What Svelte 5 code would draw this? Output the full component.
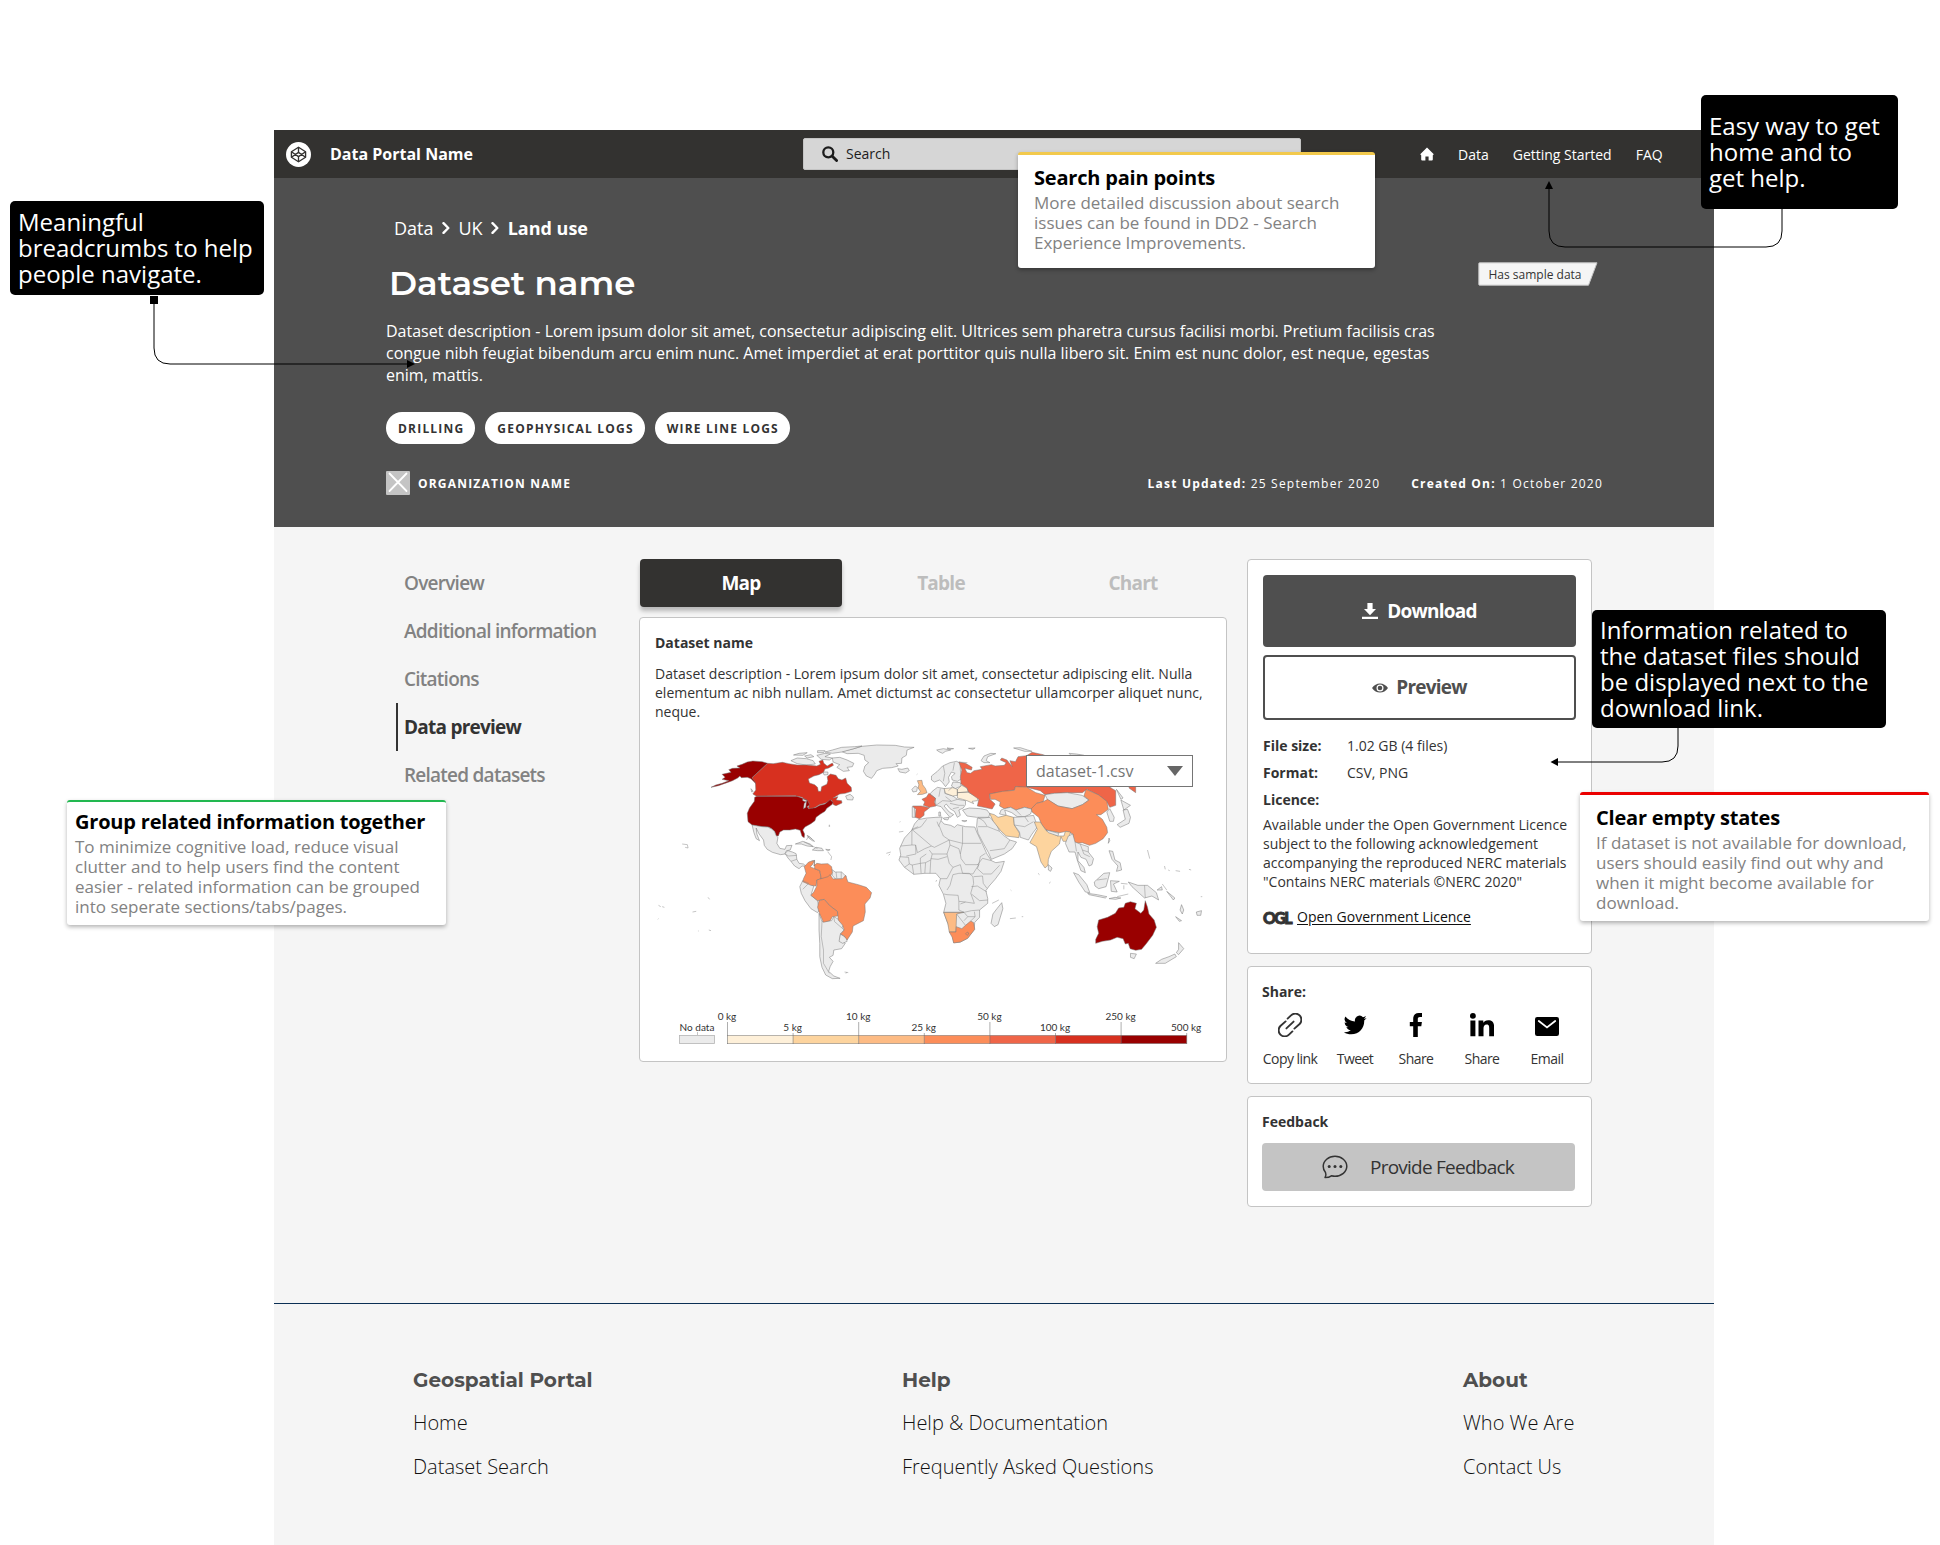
<script>
  const tags = ['DRILLING', 'GEOPHYSICAL LOGS', 'WIRE LINE LOGS'];
  const sections = ['Overview', 'Additional information', 'Citations', 'Data preview', 'Related datasets'];
  const active = 'Data preview';

  const scale = [
    { label: '0 kg', color: '#fef0d9' },
    { label: '5 kg', color: '#fdd49e' },
    { label: '10 kg', color: '#fdbb84' },
    { label: '25 kg', color: '#fc8d59' },
    { label: '50 kg', color: '#ef6548' },
    { label: '100 kg', color: '#d7301f' },
    { label: '250 kg', color: '#990000' },
    { label: '500 kg', color: null }
  ];
  const step = 65.6;

  const grey = '#ebebeb';
  const lands = [
    // Arctic and North Atlantic
    { c: grey, d: 'M575 57L600 49 640 45 690 46 715 51 741 52 722 60 720 76 708 84 707 100 692 101 698 108 680 113 656 115 640 122 635 132 626 145 612 138 604 124 608 108 618 98 608 90 606 76 590 70 560 71 545 65Z' },
    { c: grey, d: 'M520 60L545 52 580 50 600 48 575 57 545 66 520 70 500 66ZM478 76L500 70 515 72 500 80 520 84 512 90 490 88ZM408 92L425 84 450 86 468 92 474 102 450 105 425 101ZM445 78L462 74 470 80 452 84ZM520 84L540 82 560 90 578 100 574 110 560 112 566 122 550 124 532 112 540 104 522 96ZM415 75L430 70 452 68 440 76ZM480 62L500 62 496 68 480 68ZM494 126L508 126 508 134 498 135Z' },
    { c: grey, d: 'M697 116L708 118 724 114 728 122 718 129 702 126ZM802 60L820 56 840 60 826 64 818 70 808 65ZM922 92L930 78 948 70 962 71 940 80 936 92 946 98 930 98ZM1010 54L1028 53 1048 60 1060 64 1040 64ZM1160 70L1180 72 1200 76 1165 76ZM830 54L848 56 838 58ZM888 55L906 54 900 58Z' },
    // North America
    { c: '#990000', d: 'M345 100L330 95 305 93 290 96 276 103 262 108 270 114 250 115 240 119 246 127 222 133 230 142 222 148 240 152 222 160 205 165 192 172 212 167 235 158 250 152 264 144 270 138 274 143 290 142 300 146 308 155 316 164 311 150 303 143Z' },
    { c: '#d7301f', d: 'M345 100L360 101 385 97 402 101 425 105 450 105 478 108 488 103 484 94 494 90 497 100 506 108 520 99 523 106 510 114 500 117 496 127 484 134 470 138 455 147 458 159 472 164 480 172 482 184 489 184 491 170 505 163 508 152 506 140 515 132 530 136 536 146 546 150 556 144 560 160 571 172 572 184 555 190 540 192 522 204 535 200 530 210 545 212 546 219 530 227 523 224 518 211 500 220 485 224 474 232 462 238 455 234 458 222 448 210 438 202 420 197 314 198 305 192 313 180 312 158 303 143Z' },
    { c: '#990000', d: 'M316 199L424 199 438 204 452 210 459 224 452 230 456 236 474 233 486 226 500 222 514 209 522 217 520 223 505 235 500 244 488 252 476 262 473 272 462 281 446 291 440 300 445 312 444 323 438 319 433 301 420 297 405 300 388 300 378 306 374 318 368 317 364 304 356 296 348 291 330 290 303 285 292 275 290 250 296 234 309 214 310 202Z' },
    { c: grey, d: 'M556 198L568 193 577 201 575 210 560 209ZM300 176L306 184 302 186ZM440 206L452 212 449 216 440 212ZM444 220L450 214 448 232 442 236Z' },
    { c: grey, d: 'M303 285L330 290 345 291 356 297 364 305 368 317 373 322 370 340 378 355 392 358 396 347 411 346 406 360 396 362 392 372 380 374 358 367 344 358 336 346 334 330 322 312 314 294 316 312 323 332 314 326 308 308Z' },
    { c: grey, d: 'M392 370L400 362 412 366 422 371 424 388 430 400 442 402 449 409 438 408 430 416 418 408 408 394 400 384ZM420 342L440 334 460 342 468 350 452 348 436 342ZM466 360L476 352 492 355 496 362 480 362ZM502 358L514 359 508 363ZM452 316L462 324 472 334 466 332 456 324Z' },
    // South America
    { c: grey, d: 'M432 470L440 452 450 455 470 468 462 496 480 512 485 540 480 548 462 536 446 512 436 490ZM518 418L528 426 545 426 558 440 548 448 528 447 520 436Z' },
    { c: grey, d: 'M484 550L492 575 518 572 524 560 540 570 550 584 546 594 552 600 542 612 540 632 555 640 545 656 524 660 522 676 512 682 522 694 514 710 510 724 524 738 541 745 520 746 502 735 492 712 486 680 486 640 484 600Z' },
    { c: grey, d: 'M542 612L558 624 560 634 548 640 538 634Z' },
    { c: '#fc8d59', d: 'M472 391L466 404 460 410 472 416 486 422 490 446 478 450 476 468 462 466 440 455 442 446 449 430 444 410 456 396Z' },
    { c: '#fc8d59', d: 'M472 391L470 408 478 400 490 402 508 401 518 410 520 428 514 440 500 448 490 446 486 422 472 416Z' },
    { c: '#fc8d59', d: 'M490 446L508 440 514 434 522 447 548 446 556 436 562 456 590 464 612 472 626 488 622 504 608 522 609 546 604 572 576 588 574 606 560 630 552 618 542 612 552 600 548 586 536 570 534 545 512 526 498 508 480 512 462 496 470 486 478 468 478 450Z' },
    { c: '#fc8d59', d: 'M484 512L498 508 512 526 534 545 534 558 520 560 514 572 496 577 486 552 480 532Z' },
    // Africa
    { c: grey, d: 'M752 269L775 264 800 262 817 261 814 272 822 282 840 286 850 292 858 284 880 290 905 291 912 310 925 340 938 372 950 392 962 398 985 394 976 424 960 448 944 468 935 482 940 505 940 520 918 540 918 562 905 577 903 600 885 625 865 637 848 638 843 608 832 580 821 547 827 520 820 492 808 466 812 446 800 430 770 430 740 433 715 412 700 390 705 375 702 355 715 324 735 300 742 282ZM978 518L981 536 968 584 958 590 949 580 954 552 965 536Z' },
    { c: '#fdbb84', d: 'M821 547L876 547 856 552 854 606 836 606 832 580Z' },
    { c: '#fc8d59', d: 'M836 606L854 606 855 590 870 596 880 586 894 573 902 578 905 598 886 625 866 636 848 639 844 622ZM880 611L886 606 889 612 884 616Z' },
    // Europe
    { c: grey, d: 'M788 150L788 138 804 124 818 108 838 98 856 94 866 100 866 120 870 146 858 154 844 150 842 140 852 130 842 126 834 142 836 156 826 170 818 158 810 150 796 156Z' },
    { c: grey, d: 'M790 184L804 172 824 176 824 190 846 198 858 208 880 212 880 224 874 234 862 240 866 256 858 262 850 244 838 236 828 222 822 228 836 246 848 254 838 262 824 244 814 230 800 226 798 204 784 192ZM846 156L866 158 868 168 852 176 842 168ZM735 178L744 168 750 172 748 184 738 186Z' },
    { c: grey, d: 'M736 230L742 232 744 262 736 262ZM820 264L836 262 832 270 822 268ZM870 272L884 272 878 275ZM808 246L812 246 813 258 808 258ZM702 276L704 275' },
    { c: '#fdbb84', d: 'M750 152L762 151 764 164 772 176 776 188 764 193 750 194 758 184 752 174 754 164Z' },
    { c: '#ef6548', d: 'M762 208L774 202 781 190 799 205 796 216 800 228 782 232 766 226 770 216Z' },
    { c: '#ef6548', d: 'M737 228L760 228 783 233 768 246 768 256 756 266 744 262 746 238Z' },
    { c: '#fef0d9', d: 'M822 176L846 173 858 178 858 196 846 198 826 190ZM858 178L870 166 884 174 888 186 858 188ZM858 188L886 186 914 202 912 212 898 214 902 221 884 212 872 208 858 204Z' },
    // Asia
    { c: '#ef6548', d: 'M862 96L880 100 898 112 896 120 878 115 884 128 894 130 903 122 925 118 920 110 950 104 960 108 985 106 990 98 974 90 978 84 992 90 1006 110 1000 92 1015 95 1022 80 1045 77 1060 67 1090 74 1110 84 1200 82 1400 95 1480 112 1440 134 1360 140 1340 170 1340 188 1322 174 1325 150 1270 172 1286 182 1286 226 1270 232 1262 215 1240 195 1208 178 1196 188 1155 188 1120 190 1095 194 1082 182 1050 173 1015 170 1012 180 980 185 945 192 946 208 960 222 952 237 930 232 912 228 916 208 888 186 884 174 868 162 866 140 870 120Z' },
    { c: '#fc8d59', d: 'M945 192L980 184 1012 181 1015 170 1045 171 1070 188 1095 196 1090 215 1072 220 1060 238 1040 232 1016 240 1002 232 985 236 972 228 974 216 960 208 948 208Z' },
    { c: grey, d: 'M985 236L1002 232 1016 240 1040 232 1060 238 1056 252 1040 260 1020 260 1005 248 986 240 990 256 972 252 976 240ZM872 240L890 234 920 236 938 240 946 252 942 262 910 262 884 258Z' },
    { c: grey, d: 'M912 265L946 262 965 285 972 304 985 318 1000 330 1018 336 1006 356 985 372 950 388 942 368 928 340 914 310 910 290Z' },
    { c: '#fdd49e', d: 'M945 250L958 254 968 262 990 256 1010 262 1012 285 1026 310 1024 323 990 318 975 302 955 274Z' },
    { c: grey, d: 'M1010 262L1040 260 1064 256 1070 275 1075 290 1060 312 1050 330 1028 322 1026 306 1012 285Z' },
    { c: grey, d: 'M1095 194L1120 190 1155 188 1195 196 1213 210 1196 224 1168 236 1130 228 1102 210Z' },
    { c: '#fc8d59', d: 'M1090 215L1102 208 1130 228 1168 236 1196 224 1214 210 1200 198 1206 178 1240 195 1262 214 1266 238 1246 254 1234 254 1250 268 1262 292 1264 308 1252 326 1232 340 1215 346 1196 338 1180 340 1172 334 1170 312 1154 304 1134 308 1098 300 1086 284 1078 262 1060 246 1058 236 1072 220Z' },
    { c: '#fdd49e', d: 'M1066 276L1082 276 1098 302 1130 318 1146 318 1150 304 1164 306 1156 334 1144 334 1138 320 1134 342 1112 364 1104 388 1103 406 1095 414 1084 396 1072 350 1054 338 1064 318 1074 298Z' },
    { c: grey, d: 'M1098 300L1132 310 1130 318 1104 308ZM1158 318L1170 312 1176 336 1190 342 1212 350 1212 366 1226 386 1222 404 1214 408 1206 388 1192 382 1184 366 1184 392 1200 412 1204 428 1192 422 1182 390 1176 366 1160 366 1150 340ZM1104 404L1114 414 1110 424 1104 420ZM1262 246L1270 236 1282 262 1280 274 1270 274ZM1288 178L1306 204 1300 208ZM1300 210L1326 226 1308 240ZM1306 240L1318 238 1326 262 1322 280 1298 292 1290 284 1312 268Z' },
    { c: grey, d: 'M1268 324L1270 332 1266 340ZM1268 362L1278 364 1284 390 1298 398 1302 420 1288 424 1292 408 1276 388ZM1172 428L1186 434 1208 464 1216 488 1204 486 1186 456ZM1210 490L1236 494 1262 500 1258 504 1214 494ZM1228 456L1254 430 1270 428 1260 470 1240 476 1230 468ZM1272 452L1296 454 1280 462 1290 486 1274 484ZM1320 456L1346 466 1372 466 1396 488 1402 510 1384 498 1364 504 1346 486 1330 470ZM1268 506L1284 502 1300 504 1286 508ZM1398 480L1410 470 1412 480ZM1424 484L1446 504 1442 510Z' },
    // Oceania
    { c: '#990000', d: 'M1366 512L1372 532 1376 552 1390 570 1396 592 1386 616 1368 642 1356 658 1340 661 1325 656 1320 640 1312 642 1306 626 1290 622 1272 630 1250 634 1232 640 1232 628 1240 610 1236 590 1240 570 1264 562 1285 550 1294 534 1308 532 1312 520 1326 515 1342 520 1338 536 1354 550 1362 540Z' },
    { c: grey, d: 'M1326 670L1342 672 1336 686 1326 682ZM1456 638L1470 656 1456 674 1450 668 1456 658ZM1446 672L1450 680 1420 700 1394 700 1410 688 1430 680ZM1464 524L1470 540 1466 552 1460 540ZM1448 560L1464 572 1458 574ZM1504 546L1518 542 1516 556 1506 556Z' }
  ];

  const borders =
    'M735 300L760 290 775 268M735 300L735 345 705 348M735 298L788 348 796 352 836 330 820 318 808 285 814 272M752 290L735 298M788 348L770 356 750 368 745 345 735 345M836 330L838 345 830 372 790 372 782 360M808 290L803 275M836 330L872 340M872 290L872 340 922 340M872 340L866 372 868 386 880 404 916 404 920 380 934 370M838 345L862 356 866 372M830 372L836 400 846 412 866 404M790 372L786 390 784 430M786 386L806 388 830 380M770 430L772 398 786 390M760 430L758 400 772 398M740 433L736 405 758 400 758 384 774 372M715 412L728 402 736 405M702 380L726 382 728 402M720 378L746 372 745 345M812 446L830 446 846 412M846 434L862 430 890 430 900 440 902 460 894 490 904 520 880 516 862 514 860 496 830 494 822 492M846 434L838 466 830 480M866 404L872 430 900 432 916 404M916 404L912 416 928 432 950 432 972 406M902 440L926 438 928 460 938 475M896 470L912 468 938 486M896 492L918 512 940 510M862 514L862 540 876 547 896 542 918 540M821 547L876 547 886 560 906 560 904 545M856 552L880 586M880 516L866 522M886 560L876 572M894 573L906 560M844 172L834 182M820 108L824 130 820 154M850 98L846 122M800 226L818 212 842 214M826 200L842 214 858 208M838 220L862 226 876 226M846 236L862 232M812 176L808 200M914 290L940 290 972 304M946 362L985 356 1000 330M914 262L930 274 938 288M1012 285L1040 290 1064 275M1040 260L1050 276M1016 240L1030 256M1176 336L1180 364M1190 342L1200 372 1216 380M1196 360L1212 366M492 575L490 620 496 660 496 700 512 730M524 560L526 575 546 594M440 452L456 460 440 478M392 372L402 378 424 376M408 394L424 388M530 426L532 444M544 426L544 446M1236 450L1262 446M1364 466L1366 504M912 405L926 385 950 392M885 98L862 96';
  const specks =
    'M114 342L128 344 130 354 122 352M184 502L188 508M50 526L56 530M60 530L66 532M142 546L152 544M48 568L50 566M158 602L158 604M186 600L192 602M508 366L518 380 516 390M464 392L470 392M700 306L712 304M666 370L678 366M672 376L676 372M553 726L563 728M556 730L560 727M1000 566L1016 564M1032 560L1036 560M1372 360L1378 386M1418 408L1420 418M1428 420L1432 422M1448 422L1460 424M1484 418L1490 420M1300 460L1318 462M1308 466L1308 478M1290 500L1320 492M1412 462L1424 480M1516 500L1520 500M510 288L514 288M512 290L512 284M748 134L750 132M952 520L970 510M800 455L802 450M1076 430L1080 434M1106 460L1110 456M1002 480L1004 482M444 336L480 356M450 330L456 318 466 328';
</script>

<div class="board">
  <div class="frame">
    <header class="topbar">
      <svg class="logo" viewBox="0 0 24 24">
        <circle cx="12" cy="12" r="12" fill="#fff" />
        <g fill="none" stroke="#333230" stroke-width="1.3" stroke-linejoin="round">
          <path d="M12 5L18.8 9.4V14.6L12 19L5.2 14.6V9.4Z" />
          <path d="M5.2 9.4L12 14L18.8 9.4M5.2 14.6L12 10L18.8 14.6M12 5V10M12 14V19" />
        </g>
      </svg>
      <strong class="portal">Data Portal Name</strong>
      <div class="search">
        <svg viewBox="0 0 16 16" width="16" height="16">
          <circle cx="6.3" cy="6.3" r="5" fill="none" stroke="#1c1c1c" stroke-width="2.3" />
          <path d="M10 10L14.6 14.6" stroke="#1c1c1c" stroke-width="2.8" stroke-linecap="round" />
        </svg>
        <span>Search</span>
      </div>
      <nav class="links">
        <svg viewBox="0 0 14 14" width="14" height="14">
          <path d="M7 .4L13.8 7.2 12.8 8.2V12.6Q12.8 13.6 11.8 13.6H8.6V9.4H5.4V13.6H2.2Q1.2 13.6 1.2 12.6V8.2L.2 7.2Z" fill="#fff" />
        </svg>
        <span>Data</span>
        <span>Getting Started</span>
        <span>FAQ</span>
      </nav>
    </header>

    <section class="hero">
      <div class="crumbs">
        <span>Data</span>
        <svg viewBox="0 0 8 12" width="8" height="12"><path d="M1.5 1.2L6.3 6L1.5 10.8" /></svg>
        <span>UK</span>
        <svg viewBox="0 0 8 12" width="8" height="12"><path d="M1.5 1.2L6.3 6L1.5 10.8" /></svg>
        <strong>Land use</strong>
      </div>
      <div class="title-row">
        <h1>Dataset name</h1>
        <div class="sample">
          <svg viewBox="0 0 120 24" width="120" height="24">
            <path d="M1.5 .8H119L110.5 23.2H1.5Q.8 23.2 .8 22.5V1.5Q.8 .8 1.5 .8Z" fill="#f5f5f5" stroke="#c4c4c4" />
          </svg>
          <span>Has sample data</span>
        </div>
      </div>
      <p class="desc">
        Dataset description - Lorem ipsum dolor sit amet, consectetur adipiscing elit. Ultrices sem pharetra cursus facilisi morbi. Pretium facilisis cras<br />
        congue nibh feugiat bibendum arcu enim nunc. Amet imperdiet at erat porttitor quis nulla libero sit. Enim est nunc dolor, est neque, egestas<br />
        enim, mattis.
      </p>
      <div class="tags">
        {#each tags as tag}<span>{tag}</span>{/each}
      </div>
      <div class="meta">
        <svg viewBox="0 0 24 24" width="24" height="24">
          <rect width="24" height="24" rx="1" fill="#c4c4c4" />
          <path d="M3.5 2.5L20.5 20M20.5 2.5L3.5 20" stroke="#fff" stroke-width="1.8" stroke-linecap="round" />
        </svg>
        <strong>ORGANIZATION NAME</strong>
        <span class="dates">
          <span><b>Last Updated:</b> 25 September 2020</span>
          <span><b>Created On:</b> 1 October 2020</span>
        </span>
      </div>
    </section>

    <main>
      <nav class="side">
        {#each sections as s}<span class:active={s === active}>{s}</span>{/each}
      </nav>

      <div class="center">
        <div class="tabs">
          <span class="tab on">Map</span>
          <span class="tab second">Table</span>
          <span class="tab third">Chart</span>
        </div>
        <section class="card mapcard">
          <h3>Dataset name</h3>
          <p>
            Dataset description - Lorem ipsum dolor sit amet, consectetur adipiscing elit. Nulla<br />
            elementum ac nibh nullam. Amet dictumst ac consectetur ullamcorper aliquet nunc,<br />
            neque.
          </p>
          <div class="map">
            <svg class="world" viewBox="0 0 1568 780" preserveAspectRatio="none" width="580" height="260">
              {#each lands as land}
                <path d={land.d} fill={land.c} class="land" />
              {/each}
              <path d={borders} class="border" />
              <path d={specks} class="border" />
            </svg>
            <div class="select">
              <span>dataset-1.csv</span>
              <svg viewBox="0 0 16 10" width="16" height="10"><path d="M0 0H16L8 10Z" fill="#666" /></svg>
            </div>
          </div>
          <svg class="legend" viewBox="0 0 560 44" width="560" height="44">
            <rect x="24.5" y="27.5" width="35" height="8" fill="#ebebeb" stroke="#b5b5b5" stroke-width=".8" />
            <path d="M42.500 24V27" stroke="#aaa" stroke-width=".7" />
            <text x="42" y="23">No data</text>
            {#each scale as s, i}
              {#if s.color}
                <rect x={72.5 + i * step} y="27.5" width={step} height="8" fill={s.color} />
              {/if}
            {/each}
            <path d="M72 27.5H532M72 35.5H532" stroke="#555" stroke-width=".6" opacity=".7" />
            {#each scale as s, i}
              <path
                d="M{72.5 + i * step} {i % 2 ? 25 : 14}V36"
                stroke="#666"
                stroke-width=".7"
                opacity=".75"
              />
              <text x={72 + i * step} y={i % 2 ? 23 : 11.5}>{s.label}</text>
            {/each}
          </svg>
        </section>
      </div>

      <aside>
        <section class="card files">
          <div class="btn solid">
            <svg viewBox="0 0 16 16" width="16" height="16">
              <path d="M5.4 0H10.6V6H14L8 12.2 2 6H5.4ZM0 13.8H16V16H0Z" fill="#fff" />
            </svg>
            <span>Download</span>
          </div>
          <div class="btn outline">
            <svg viewBox="0 0 16 10" width="16" height="10">
              <path d="M0 5Q3.2 .4 8 .4T16 5Q12.8 9.6 8 9.6T0 5Z" fill="#4f4f4f" />
              <circle cx="8" cy="5" r="3.5" fill="#fff" />
              <circle cx="8" cy="5" r="2.300" fill="#4f4f4f" />
            </svg>
            <span>Preview</span>
          </div>
          <dl>
            <dt>File size:</dt><dd>1.02 GB (4 files)</dd>
            <dt>Format:</dt><dd>CSV, PNG</dd>
            <dt>Licence:</dt>
          </dl>
          <p>
            Available under the Open Government Licence<br />
            subject to the following acknowledgement<br />
            accompanying the reproduced NERC materials<br />
            "Contains NERC materials ©NERC 2020"
          </p>
          <div class="ogl"><b>OGL</b><a href="#licence">Open Government Licence</a></div>
        </section>

        <section class="card share">
          <h3>Share:</h3>
          <div class="icons">
            <div>
              <svg viewBox="0 0 24 24" width="24" height="24" fill="none" stroke="#333" stroke-width="1.9" stroke-linecap="round">
                <path d="M9.600 5.600L13 2.400A5.400 5.400 0 0 1 21.600 11L16.400 15.600" />
                <path d="M14.400 18.400L11 21.600A5.400 5.400 0 0 1 2.400 13L7.600 8.400" />
                <path d="M8.400 15.400L15.600 8.600" />
              </svg>
              <span>Copy link</span>
            </div>
            <div>
              <svg viewBox="0 0 24 24" width="24" height="24">
                <path d="M23.6 4.9c-.8.4-1.700.6-2.700.8.9-.6 1.700-1.500 2-2.600-.9.5-1.900.9-2.900 1.100a4.700 4.700 0 0 0-8 4.300C8.100 8.300 4.700 6.400 2.400 3.600a4.700 4.700 0 0 0 1.400 6.300c-.7 0-1.500-.2-2.100-.6v.1c0 2.300 1.600 4.200 3.800 4.600-.7.200-1.400.2-2.100.1.600 1.800 2.300 3.200 4.400 3.200A9.500 9.500 0 0 1 .9 19.200c2.100 1.300 4.600 2.100 7.200 2.100 8.700 0 13.500-7.200 13.100-13.900.9-.7 1.700-1.500 2.400-2.500z" fill="#000" />
              </svg>
              <span>Tweet</span>
            </div>
            <div>
              <svg viewBox="0 0 24 24" width="24" height="24">
                <path d="M9.200 24V13.200H5.800V9H9.200V5.800C9.200 2 11.400 0 14.700 0H18V3.900H16C14.400 3.900 13.800 4.700 13.800 6V9H17.900L17.300 13.200H13.800V24Z" fill="#000" />
              </svg>
              <span>Share</span>
            </div>
            <div>
              <svg viewBox="0 0 24 24" width="24" height="24">
                <circle cx="2.900" cy="2.900" r="2.900" />
                <path d="M.4 7.600H5.400V23.300H.4ZM8.500 7.600H13.300V9.800C14 8.500 15.700 7.200 18.200 7.200 23.200 7.200 24.200 10.400 24.200 14.700V23.300H19.200V15.700C19.200 13.900 19.200 11.600 16.800 11.600 14.300 11.600 13.500 13.400 13.500 15.600V23.300H8.500Z" />
              </svg>
              <span>Share</span>
            </div>
            <div>
              <svg viewBox="0 0 24 24" width="24" height="24">
                <rect x="0" y="4" width="24" height="19" rx="2.200" />
                <path d="M3.800 8L12 14.400 20.200 8" fill="none" stroke="#fff" stroke-width="1.800" stroke-linecap="round" />
              </svg>
              <span>Email</span>
            </div>
          </div>
        </section>

        <section class="card feedback">
          <h3>Feedback</h3>
          <div class="give">
            <svg viewBox="0 0 26 24" width="26" height="24">
              <path d="M3.500 17.500A10.200 9.600 0 0 1 1.200 11.300C1.200 5.700 6.500 1.300 13 1.300S24.800 5.700 24.800 11.300 19.500 21.300 13 21.300A14 14 0 0 1 9.400 20.800C7.600 22.200 5.400 22.600 3 22.600 4 21.200 4.300 19.400 3.500 17.500Z" fill="none" stroke="#333" stroke-width="1.500" stroke-linejoin="round" />
              <g fill="#333"><circle cx="7.200" cy="11.500" r="1.500" /><circle cx="13" cy="11.500" r="1.500" /><circle cx="18.800" cy="11.500" r="1.500" /></g>
            </svg>
            <span>Provide Feedback</span>
          </div>
        </section>
      </aside>
    </main>

    <footer>
      <div><h4>Geospatial Portal</h4><span>Home</span><span>Dataset Search</span></div>
      <div><h4>Help</h4><span>Help &amp; Documentation</span><span>Frequently Asked Questions</span></div>
      <div><h4>About</h4><span>Who We Are</span><span>Contact Us</span></div>
    </footer>
  </div>

  <!-- Annotations laid over the mockup -->
  <svg class="wires" viewBox="0 0 1940 1545" width="1940" height="1545">
    <g fill="none" stroke="#000" stroke-width="1">
      <path d="M154 300V348Q154 364 170 364H408" />
      <path d="M1782 208V231Q1782 247 1766 247H1565Q1549 247 1549 231V188" />
      <path d="M1678 727V746Q1678 762 1662 762H1557" />
    </g>
    <path d="M150 296H158V304H150ZM407 360L415 364 407 368ZM1545 189L1549 181 1553 189ZM1558 758L1550.500 762 1558 766Z" />
  </svg>

  <div class="black crumbs-note">Meaningful<br />breadcrumbs to help<br />people navigate.</div>
  <div class="black home-note">Easy way to get<br />home and to<br />get help.</div>
  <div class="black info-note">Information related to<br />the dataset files should<br />be displayed next to the<br />download link.</div>

  <div class="note yellow">
    <h2>Search pain points</h2>
    <p>More detailed discussion about search<br />issues can be found in DD2 - Search<br />Experience Improvements.</p>
  </div>
  <div class="note green">
    <h2>Group related information together</h2>
    <p>To minimize cognitive load, reduce visual<br />clutter and to help users find the content<br />easier - related information can be grouped<br />into seperate sections/tabs/pages.</p>
  </div>
  <div class="note red">
    <h2>Clear empty states</h2>
    <p>If dataset is not available for download,<br />users should easily find out why and<br />when it might become available for<br />download.</p>
  </div>
</div>

<style>
  :global(body) { background: #fff; }
  .board, .board * { box-sizing: border-box; }
  .board {
    position: relative;
    width: 1940px;
    height: 1545px;
    padding: 130px 0 0 274px;
    overflow: hidden;
    background: #fff;
    color: #333;
    font-family: 'Open Sans', 'Noto Sans', sans-serif;
    white-space: nowrap;
  }
  h1, h2, h3, h4, p, dl, dd { margin: 0; }
  svg { display: block; flex: none; }
  .frame { width: 1440px; height: 1415px; background: #f5f5f5; }

  .topbar {
    display: flex;
    align-items: center;
    height: 48px;
    padding-left: 12px;
    background: #333230;
    color: #fff;
  }
  .logo { width: 25px; height: 25px; }
  .portal { width: 492px; padding-left: 19px; font-size: 16px; font-weight: 700; }
  .search {
    display: flex;
    align-items: center;
    gap: 8px;
    width: 498px;
    height: 32px;
    padding-left: 18px;
    border: 1px solid #c4c4c4;
    border-radius: 2px;
    background: #d6d6d6;
    color: #1c1c1c;
    font-size: 14px;
  }
  .search span { padding-bottom: 1px; }
  .links { display: flex; align-items: center; gap: 24px; margin-left: 119px; font-size: 14px; }

  .hero { height: 349px; padding: 38px 0 0 112px; background: #4f4f4f; color: #fff; }
  .crumbs { display: flex; align-items: center; gap: 8.500px; height: 24px; padding-left: 8px; font-size: 18px; line-height: 24px; }
  .crumbs path { fill: none; stroke: #fff; stroke-width: 2.400; stroke-linecap: round; stroke-linejoin: round; }
  .crumbs strong { font-weight: 700; }
  .title-row { display: flex; justify-content: space-between; height: 40px; margin-top: 22px; padding: 0 116px 0 3px; }
  h1 { font: 600 34px/42px Montserrat, Inter, sans-serif; }
  .sample { position: relative; width: 120px; height: 24px; color: #333; font-size: 12px; line-height: 24px; }
  .sample span { position: absolute; left: 10.500px; top: 1px; }
  .desc { margin-top: 18px; font-size: 16px; line-height: 22px; }
  .tags { display: flex; gap: 10px; margin-top: 26px; }
  .tags span {
    height: 32px;
    padding: 0 11px 0 12px;
    border-radius: 16px;
    background: #fff;
    color: #333;
    font-size: 12px;
    font-weight: 700;
    line-height: 34px;
    letter-spacing: 1.200px;
  }
  .meta { display: flex; align-items: center; height: 24px; margin-top: 27px; font-size: 12px; letter-spacing: 1.200px; }
  .meta strong { margin-left: 8px; }
  .dates { display: flex; gap: 31px; margin-left: auto; padding-right: 111px; }

  main { display: flex; height: 776px; padding: 32px 0 0 122px; align-items: flex-start; }
  .side { width: 243px; display: flex; flex-direction: column; }
  .side span {
    height: 48px;
    padding-left: 6px;
    border-left: 2px solid transparent;
    color: #828282;
    font-size: 19px;
    font-weight: 600;
    line-height: 48px;
    letter-spacing: -0.040em;
  }
  .side .active { border-color: #333; color: #333; font-weight: 700; }

  .center { width: 588px; margin-right: 20px; }
  .tabs { display: flex; height: 48px; margin: 0 0 10px 1px; }
  .tab { color: #bdbdbd; font-size: 19px; font-weight: 700; line-height: 48px; letter-spacing: -0.040em; text-align: center; }
  .on { width: 202px; border-radius: 4px; background: #333230; color: #fff; box-shadow: 0 4px 4px rgba(0, 0, 0, 0.25); }
  .second { width: 198px; }
  .third { width: 186px; }

  .card { border: 1px solid #c4c4c4; border-radius: 4px; background: #fff; }
  h3 { color: #333; font-size: 14px; font-weight: 700; line-height: 19px; }
  .mapcard { height: 445px; padding: 15px 0 0 15px; }
  .mapcard p { margin-top: 12px; font-size: 14px; line-height: 19px; }
  .map { position: relative; width: 580px; height: 260px; margin: 9px 0 0 -15px; }
  .land { stroke: #777; stroke-width: 0.500; vector-effect: non-scaling-stroke; stroke-linejoin: round; }
  .border { fill: none; stroke: #8a8a8a; stroke-width: 0.500; vector-effect: non-scaling-stroke; }
  .select {
    position: absolute;
    left: 386px;
    top: 25px;
    display: flex;
    align-items: center;
    justify-content: space-between;
    width: 167px;
    height: 32px;
    padding: 0 9px;
    border: 1px solid #757575;
    background: #fff;
    color: #757575;
    font-size: 16px;
  }
  .legend { margin-top: 18px; }
  .legend text { fill: #333; font: 10px Lato, sans-serif; text-anchor: middle; }

  aside { width: 345px; display: flex; flex-direction: column; gap: 12px; }
  .files { height: 395px; padding: 15px 15px 0; }
  .btn {
    display: flex;
    align-items: center;
    justify-content: center;
    border-radius: 4px;
    font-size: 19px;
    font-weight: 700;
    letter-spacing: -0.040em;
  }
  .solid { gap: 9px; height: 72px; background: #4f4f4f; color: #fff; }
  .outline { gap: 8px; height: 65px; margin-top: 8px; border: 2px solid #4f4f4f; color: #4f4f4f; }
  .outline span { padding-bottom: 1px; }
  dl { display: grid; grid-template-columns: 84px auto; margin-top: 12px; font-size: 14px; line-height: 27px; }
  dt { font-weight: 700; }
  .files p { margin-top: 2px; font-size: 14px; line-height: 19px; }
  .ogl { display: flex; gap: 5px; margin-top: 16px; font-size: 14px; line-height: 20px; }
  .ogl b {
    width: 29px;
    font: 900 16px/21px Lato, sans-serif;
    letter-spacing: -1.700px;
    -webkit-text-stroke: 0.900px #333;
  }
  .ogl a { color: #111; text-underline-offset: 2px; }
  .share { height: 118px; padding: 15px 0 0 14px; }
  .icons { display: grid; grid-template-columns: 56px 74px 48px 84px 46px; margin-top: 12px; }
  .icons div { display: flex; flex-direction: column; align-items: center; gap: 12px; }
  .icons span { font-size: 14px; line-height: 19px; letter-spacing: -0.040em; }
  .feedback { height: 111px; padding: 15px 0 0 14px; }
  .give {
    display: flex;
    align-items: center;
    gap: 22px;
    width: 313px;
    height: 48px;
    margin-top: 12px;
    padding-left: 60px;
    border-radius: 4px;
    background: #c4c4c4;
    font-size: 19px;
    letter-spacing: -0.040em;
  }

  footer {
    display: grid;
    grid-template-columns: 489px 561px auto;
    height: 242px;
    padding: 62px 0 0 139px;
    border-top: 1px solid #0b2f54;
    color: #111;
  }
  footer div { display: flex; flex-direction: column; }
  footer h4 { margin-bottom: 7px; color: #4f4f4f; font: 700 20px/28px Montserrat, Inter, sans-serif; }
  footer span { font-size: 20px; font-weight: 300; line-height: 44px; }

  .wires { position: absolute; left: 0; top: 0; }
  .black { position: absolute; border-radius: 5px; background: #000; color: #fff; font-size: 24px; line-height: 26px; }
  .crumbs-note { left: 10px; top: 201px; width: 254px; height: 94px; padding: 8px 0 0 8px; }
  .home-note { left: 1701px; top: 95px; width: 197px; height: 114px; padding: 18px 0 0 8px; }
  .info-note { left: 1592px; top: 610px; width: 294px; height: 118px; padding: 7px 0 0 8px; }

  .note { position: absolute; border-radius: 3px; border-top: 3px solid; background: #fff; box-shadow: 0 2px 4px rgba(0, 0, 0, 0.300); }
  .note h2 { color: #000; font-size: 20px; font-weight: 700; line-height: 26px; letter-spacing: -0.200px; }
  .note p { margin-top: 2px; color: #828282; font-size: 17px; line-height: 20px; }
  .yellow { left: 1018px; top: 152px; width: 357px; height: 116px; padding: 10px 0 0 16px; border-color: #f2c94c; }
  .green { left: 67px; top: 800px; width: 379px; height: 125px; padding: 7px 0 0 8px; border-top-width: 2px; border-color: #22b850; }
  .red { left: 1580px; top: 792px; width: 349px; height: 129px; padding: 10px 0 0 16px; border-color: #eb0000; }
</style>
